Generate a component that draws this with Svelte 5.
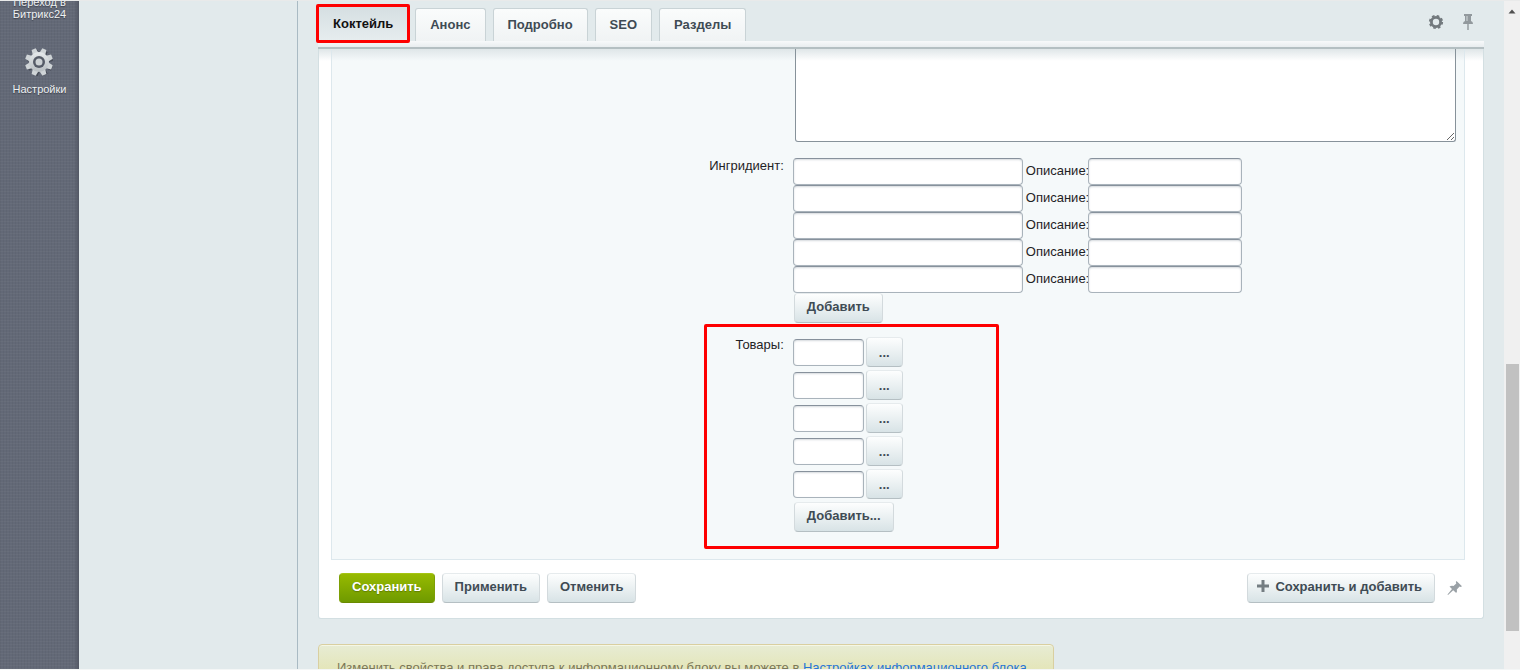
<script>
  const tabs = ['Коктейль', 'Анонс', 'Подробно', 'SEO', 'Разделы'];
  const rows = [1, 2, 3, 4, 5];
  let active = $state(0);
</script>

<div class="page">
  <nav class="side">
    <a class="side-link" href="#b24">Переход в Битрикс24</a>
    <a class="side-link" href="#settings">
      <svg width="30" height="30" viewBox="-14 -16 30 30" aria-hidden="true">
        <defs>
          <linearGradient id="metal" x1="0" y1="0" x2="0" y2="1">
            <stop offset="0" stop-color="#e6eaec" />
            <stop offset="1" stop-color="#b7bdc1" />
          </linearGradient>
        </defs>
        <g fill="#464b56" transform="translate(1 1)">
          {#each [22.5, 67.5, 112.5, 157.5] as angle}
            <path d="M-3-13H3L2 0L3 13H-3L-2 0Z" transform="rotate({angle})" />
          {/each}
        </g>
        <g fill="#cfd4d7">
          {#each [22.5, 67.5, 112.5, 157.5] as angle}
            <path d="M-2.200-14H2.200L3.200-8V8L2.200 14H-2.200L-3.200 8V-8Z" transform="rotate({angle})" />
          {/each}
        </g>
        <circle r="10" fill="url(#metal)" />
        <circle r="6" fill="#555b67" />
        <circle r="3.5" fill="#ccd1d4" />
      </svg>
      <span>Настройки</span>
    </a>
  </nav>

  <div class="tree"></div>

  <main class="content">
    <header class="bar">
      <div class="tabs" role="tablist">
        {#each tabs as tab, i}
          <button class="tab" class:active={active === i} role="tab" aria-selected={active === i} onclick={() => (active = i)}>{tab}</button>
        {/each}
        <div class="mark tab-mark"></div>
      </div>
      <div class="tools">
        <button class="icon" aria-label="Настроить форму">
          <svg width="16" height="16" viewBox="-8 -8 16 16" aria-hidden="true">
            <circle r="4.6" fill="none" stroke="#72797d" stroke-width="2.8" />
            <circle r="6.2" fill="none" stroke="#72797d" stroke-width="1.8" stroke-dasharray="2.6 2.27" />
          </svg>
        </button>
        <button class="icon" aria-label="Закрепить панель">
          <svg width="16" height="18" viewBox="0 0 16 18" aria-hidden="true">
            <path d="M4 1H12V3H11V8Q13 8.500 13 11H3Q3 8.500 5 8V3H4Z" fill="#92999d" />
            <path d="M6 3H8V8H6Z" fill="#b3babd" />
            <path d="M7.200 11H8.800V17H7.200Z" fill="#9ba2a6" />
          </svg>
        </button>
      </div>
    </header>
    <div class="strip"></div>

    <section class="panel">
      <form class="fields" onsubmit={(e) => e.preventDefault()}>
        <div class="row first">
          <div class="label"></div>
          <div class="value"><textarea aria-label="Описание коктейля"></textarea></div>
        </div>

        <div class="row">
          <label class="label" for="ing1">Ингридиент:</label>
          <div class="value">
            {#each rows as n}
              <div class="line">
                <input class="wide" id="ing{n}" type="text" aria-label="Ингридиент {n}" />
                <label class="desc" for="desc{n}">Описание:</label>
                <input class="mid" id="desc{n}" type="text" />
              </div>
            {/each}
            <button class="btn add" type="button">Добавить</button>
          </div>
        </div>

        <div class="row goods">
          <label class="label" for="good1">Товары:</label>
          <div class="value">
            {#each rows as n}
              <div class="line pick">
                <input class="short" id="good{n}" type="text" aria-label="Товар {n}" />
                <button class="btn dots" type="button">...</button>
              </div>
            {/each}
            <button class="btn add" type="button">Добавить...</button>
          </div>
          <div class="mark goods-mark"></div>
        </div>
      </form>

      <footer class="actions">
        <button class="btn save">Сохранить</button>
        <button class="btn">Применить</button>
        <button class="btn">Отменить</button>
        <button class="btn plus">
          <svg width="12" height="12" viewBox="0 0 12 12" aria-hidden="true">
            <path d="M4.500 0H7.500V4.500H12V7.500H7.500V12H4.500V7.500H0V4.500H4.500Z" fill="#747d82" />
          </svg>
          Сохранить и добавить
        </button>
        <button class="icon" aria-label="Открепить панель">
          <svg width="16" height="16" viewBox="0 0 16 16" aria-hidden="true">
            <path d="M9.500 1L15 6.200L13.600 7L12.600 6.600L9.800 9.400Q10.500 11.500 9.200 13L6.200 10.300L1 15L.500 14.600L5 9.100L2.500 6.500Q4.500 5.300 6.500 6L9.300 3.400L8.800 2Z" fill="#9aa1a6" />
          </svg>
        </button>
      </footer>
    </section>

    <p class="note">Изменить свойства и права доступа к информационному блоку вы можете в <a href="#iblock">Настройках информационного блока</a></p>
  </main>

  <div class="scroll">
    <svg width="16" height="20" viewBox="0 0 16 20" aria-hidden="true"><path d="M4.500 12.500L8 8.500L11.500 12.500Z" fill="#505050" /></svg>
    <div class="thumb"></div>
  </div>
</div>

<style>
  :global(body) {
    margin: 0;
    background: #fff;
  }
  .page {
    display: flex;
    height: 100vh;
    box-sizing: border-box;
    border-top: 1px solid #e9eaea;
    border-bottom: 1px solid #f4f6f6;
    overflow: hidden;
    font: 13px/16px "Liberation Sans", Arial, sans-serif;
    color: #1f2325;
    background: #e2eaec;
  }
  button,
  input,
  textarea {
    box-sizing: border-box;
    margin: 0;
    font-family: inherit;
  }
  .side {
    flex: 0 0 79px;
    box-sizing: border-box;
    display: flex;
    flex-direction: column;
    gap: 26px;
    background:
      linear-gradient(90deg, transparent 74px, #535865 79px),
      repeating-linear-gradient(0deg, #ffffff08 0 1px, transparent 1px 3px),
      repeating-linear-gradient(90deg, #0000000a 0 1px, transparent 1px 3px),
      #636977;
  }
  .side-link {
    display: flex;
    flex-direction: column;
    align-items: center;
    gap: 7px;
    padding: 0 8px;
    color: #eef1f3;
    font-size: 11px;
    line-height: 12px;
    text-align: center;
    text-decoration: none;
    text-shadow: 0 1px 1px #3d424d;
  }
  .side-link:first-child {
    margin-top: -5px;
  }
  .tree {
    flex: 0 0 218px;
    border-right: 1px solid #a9bac3;
  }
  .content {
    flex: 1;
    min-width: 0;
    padding: 0 20px;
  }
  .bar {
    display: flex;
    justify-content: space-between;
    height: 40px;
  }
  .tabs {
    position: relative;
    display: flex;
    align-items: flex-end;
    gap: 7px;
  }
  .tab {
    height: 33px;
    padding: 0 14px 2px;
    border: 1px solid #c9d3d6;
    border-bottom: 0;
    border-radius: 3px 3px 0 0;
    background: linear-gradient(#fafcfc, #f0f3f4);
    color: #3f4b54;
    font-size: 13px;
    font-weight: bold;
  }
  .tab.active {
    height: 37px;
    padding-bottom: 0;
    background: linear-gradient(#d4dee1, #e6edef);
    color: #111;
  }
  .mark {
    position: absolute;
    box-sizing: border-box;
    border: 3px solid #fe0000;
    border-radius: 2px;
    pointer-events: none;
  }
  .tab-mark {
    left: -2px;
    top: 3px;
    width: 94px;
    height: 39px;
    z-index: 2;
  }
  .tools {
    display: flex;
    align-items: center;
    gap: 16px;
    padding: 2px 8px 0 0;
  }
  .icon {
    display: flex;
    padding: 0;
    border: 0;
    background: none;
  }
  .strip {
    height: 6px;
    border-bottom: 2px solid #b4bfc2;
    background: linear-gradient(#f7f9fa, #e8edef);
  }
  .panel {
    padding: 0 18px 15px 12px;
    border: 1px solid #d3dfe2;
    border-top: 0;
    border-radius: 0 0 3px 3px;
    background: linear-gradient(#dfe6e8, #fff 12px);
  }
  .fields {
    padding-bottom: 26px;
    border: 1px solid #dde8ed;
    border-top: 0;
    background: linear-gradient(#dfe6e8, #f5f9fa 12px);
  }
  .row {
    position: relative;
    display: flex;
  }
  .label {
    flex: 0 0 40%;
    box-sizing: border-box;
    padding-right: 1px;
    text-align: right;
  }
  .value {
    flex: 1;
    padding: 0 8px;
  }
  .first {
    margin-bottom: 16px;
  }
  textarea {
    display: block;
    width: calc(100% - 2px);
    height: 93px;
    margin-left: 2px;
    border: 1px solid #87929a;
    border-top: 0;
    border-radius: 0 0 3px 3px;
    background: linear-gradient(#dfe6e8, #fff 12px);
  }
  .line {
    display: flex;
    align-items: center;
  }
  input {
    height: 27px;
    padding: 0 5px;
    border: 1px solid;
    border-color: #87919c #a9b3bb #a9b3bb;
    border-radius: 4px;
    background: #fff;
    box-shadow: inset 0 1px 2px #d5dade;
    font-size: 13px;
  }
  .wide {
    width: 230px;
  }
  .desc {
    box-sizing: border-box;
    width: 65px;
    padding: 0 0 2px 3px;
  }
  .mid {
    width: 154px;
  }
  .short {
    width: 71px;
  }
  .btn {
    display: block;
    height: 30px;
    padding: 0 12px 4px;
    border: 1px solid;
    border-color: #e6ebed #d3dadd #b5bfc3;
    border-radius: 4px;
    background: linear-gradient(#fdfefe, #d8e3e6);
    color: #3f4b54;
    font-size: 13px;
    font-weight: bold;
    white-space: nowrap;
  }
  .dots {
    padding-bottom: 0;
  }
  .add {
    margin: 0 1px 1px;
  }
  .pick {
    gap: 2px;
    margin-bottom: 3px;
  }
  .goods {
    margin-top: 13px;
  }
  .goods-mark {
    left: calc(40% - 81px);
    top: -13px;
    width: 295px;
    height: 225px;
  }
  .actions {
    display: flex;
    align-items: center;
    gap: 7px;
    padding: 13px 2px 0 8px;
  }
  .save {
    border-color: #a5c412 #7d9f05 #6a8a00;
    background: linear-gradient(#97ba00, #6f9a00);
    color: #fff;
    text-shadow: 0 1px 1px #5f7d00;
  }
  .plus {
    display: flex;
    align-items: center;
    gap: 6px;
    margin-left: auto;
    margin-right: 5px;
    padding-left: 9px;
  }
  .note {
    width: fit-content;
    box-sizing: border-box;
    margin: 25px 0 0;
    padding: 15px 26px 20px 18px;
    border: 1px solid #d9cfa0;
    border-radius: 4px;
    background: linear-gradient(#e7ecd4, #e2e1a8 40px);
    box-shadow: inset 0 1px 0 #f5f7e6;
    color: #7b7757;
  }
  .note a {
    color: #2675d7;
    text-decoration: none;
  }
  .scroll {
    flex: 0 0 16px;
    display: flex;
    flex-direction: column;
    background: #f0f0f0;
  }
  .thumb {
    height: 40%;
    margin: auto 1px 38px 2px;
    background: #c1c1c1;
  }
</style>
